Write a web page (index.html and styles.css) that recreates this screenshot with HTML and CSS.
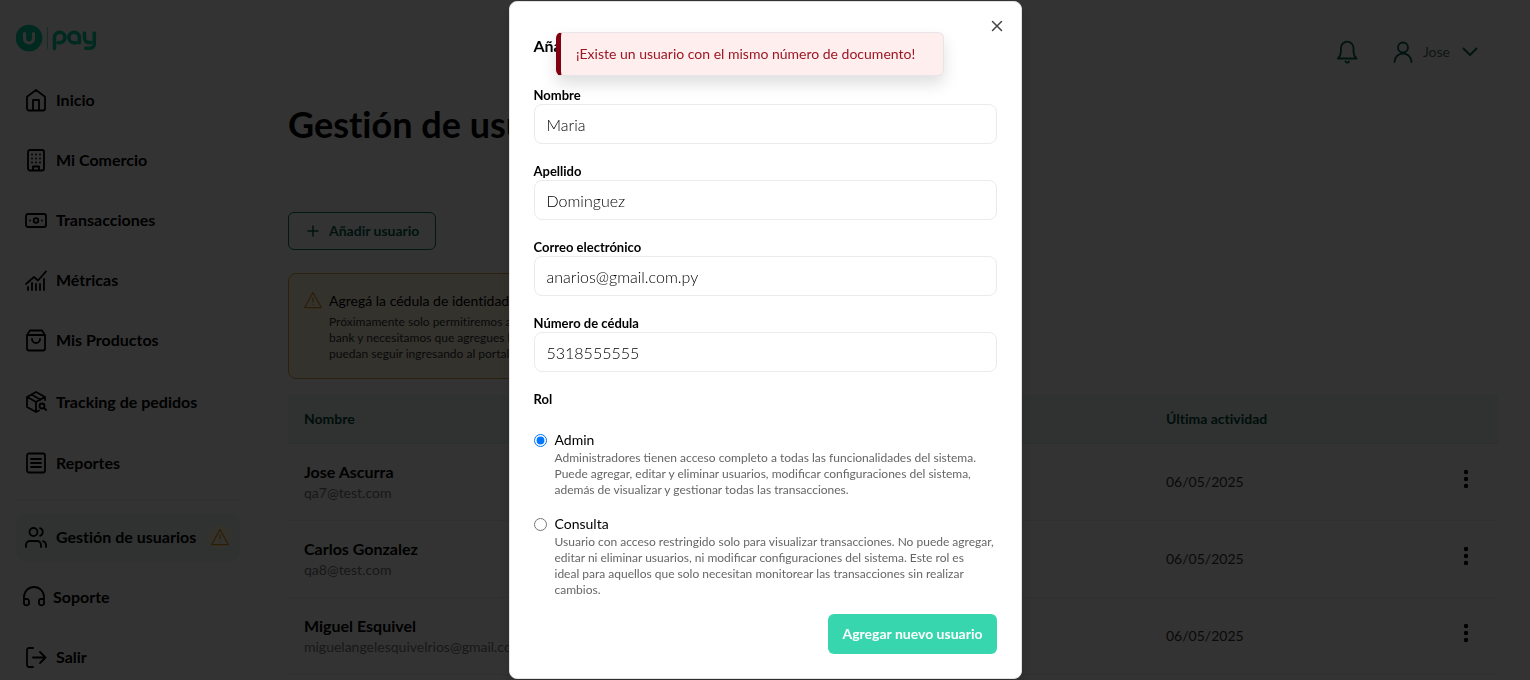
FILE: index.html
```html
<!DOCTYPE html>
<html lang="es">
<head>
<meta charset="utf-8">
<meta name="viewport" content="width=device-width, initial-scale=1">
<title>Gestión de usuarios</title>
<link rel="stylesheet" href="styles.css">
</head>
<body>
<div class="app">
  <aside class="sidebar">
    <a class="logo" href="#" aria-label="Upay">
      <svg width="82" height="28" viewBox="0 0 82 28" fill="none" stroke-linecap="round" stroke-linejoin="round">
        <circle cx="13" cy="14" r="13.300" fill="#00d09c" stroke="none"/>
        <path d="M8.500 9.500v5a4.500 4.500 0 0 0 9 0v-5" stroke="#fff" stroke-width="3.200"/>
        <path d="M13 8v6" stroke="#00d09c" stroke-width="2.400"/>
        <path d="M31.500 3.500v21" stroke="#00d09c" stroke-width="1" opacity=".6"/>
        <g stroke="#00d09c" stroke-width="3.600">
          <path d="M38.500 24.500V13.500a5.200 5.200 0 1 1 5.200 5.200h-1.500"/>
          <path d="M63.300 18.700V13.500a5.200 5.200 0 1 0-5.200 5.200h2"/>
          <path d="M68.500 9v5a4.600 4.600 0 0 0 4.600 4.600h1.500M78.300 9v11a4.200 4.200 0 0 1-4.200 4.200h-4.300"/>
        </g>
      </svg>
    </a>
    <nav class="nav">
      <a class="nav-item" href="#"><svg class="icon" viewBox="0 0 24 24"><path d="M3 8.700 12 2l9 6.700V20.500a2 2 0 0 1-2 2H5a2 2 0 0 1-2-2zM9 22V12h6v10"/></svg>Inicio</a>
      <a class="nav-item" href="#"><svg class="icon" viewBox="0 0 24 24"><rect x="4" y="2" width="16" height="20.500" rx="2"/><path d="M9 22v-3.500h6V22"/><path d="M8 6.500h.01M12 6.500h.01M16 6.500h.01M8 10.500h.01M12 10.500h.01M16 10.500h.01M8 14.500h.01M12 14.500h.01M16 14.500h.01"/></svg>Mi Comercio</a>
      <a class="nav-item" href="#"><svg class="icon" viewBox="0 0 24 24"><rect x="2" y="6" width="20" height="13" rx="2"/><circle cx="12" cy="12.500" r="2.300"/><path d="M6 12.500h.01M18 12.500h.01"/></svg>Transacciones</a>
      <a class="nav-item" href="#"><svg class="icon" viewBox="0 0 24 24"><path d="m2 16 8-7 4 3.500L22 3.500M4 22v-3M8 22v-7M12 22v-6M16 22v-6M20 22V11"/></svg>Métricas</a>
      <a class="nav-item" href="#"><svg class="icon" viewBox="0 0 24 24"><path d="M3 7v13.500a2 2 0 0 0 2 2h14a2 2 0 0 0 2-2V7l-3-4.500H6zM3 7h18M16 11a4 4 0 0 1-8 0"/></svg>Mis Productos</a>
      <a class="nav-item nav-item-tall" href="#"><svg class="icon" viewBox="0 0 24 24"><path d="M21 10V7l-9-5-9 5v10l9 5 3-1.500M3.300 7l8.700 5 8.700-5M12 22V12M7.500 4.500l9 5.200"/><circle cx="18" cy="16" r="2.500"/><path d="m20 18 2.200 2"/></svg>Tracking de pedidos</a>
      <a class="nav-item" href="#"><svg class="icon" viewBox="0 0 24 24"><rect x="3" y="2.500" width="18" height="19" rx="2"/><path d="M7 8h10M7 12h10M7 16h10"/></svg>Reportes</a>
      <hr class="nav-rule">
      <a class="nav-item nav-item-active" href="#" aria-current="page"><svg class="icon" viewBox="0 0 24 24"><circle cx="9.500" cy="7" r="4"/><path d="M2 22v-2a4 4 0 0 1 4-4h7a4 4 0 0 1 4 4v2M16 3.200a4 4 0 0 1 0 7.600M22 22v-2a4 4 0 0 0-3-3.800"/></svg>Gestión de usuarios
        <span class="nav-alert"><svg class="warning" viewBox="0 0 24 24"><path d="M12 3 22 21H2zM12 9v5M12 17.500h.01"/></svg></span></a>
      <a class="nav-item nav-item-close" href="#"><svg class="icon" viewBox="0 0 24 24"><path d="M2 14h3a2 2 0 0 1 2 2v3a3 3 0 0 1-5 0v-7a10 10 0 0 1 20 0v7a3 3 0 0 1-5 0v-3a2 2 0 0 1 2-2h3"/></svg>Soporte</a>
      <a class="nav-item" href="#"><svg class="icon" viewBox="0 0 24 24"><path d="M9 22H5a2 2 0 0 1-2-2V5a2 2 0 0 1 2-2h4M9 12.500h12M16 7l5.500 5.500L16 18"/></svg>Salir</a>
    </nav>
  </aside>
  <main class="main">
    <header class="topbar">
      <button class="plain" type="button" aria-label="Notificaciones"><svg class="icon icon-green" viewBox="0 0 24 24"><path d="M3 18.500h18.500c-2-2-3-3.500-3-6.500V8a6.300 6.300 0 0 0-12.600 0v4c0 3-.9 4.500-2.900 6.500zM10.500 21.500c1 1.500 2.500 1.500 3.500 0"/></svg></button>
      <button class="plain profile" type="button">
        <svg class="icon icon-green" viewBox="0 0 24 24"><circle cx="12" cy="7.500" r="5"/><path d="M3.500 22a8.500 8.500 0 0 1 17 0"/></svg>
        <span>Jose</span>
        <svg class="icon icon-green chevron" viewBox="0 0 24 24"><path d="m5.500 8.500 6.500 6.500 6.500-6.500"/></svg>
      </button>
    </header>
    <h1 class="page-title">Gestión de usuarios</h1>
    <button class="add-button" type="button"><svg viewBox="0 0 16 16" width="16" height="16"><path d="M8 3v10M3 8h10"/></svg>Añadir usuario</button>
    <section class="notice">
      <svg class="warning" viewBox="0 0 24 24"><path d="M12 3 22 21H2zM12 9v5M12 17.500h.01"/></svg>
      <div>
        <h2 class="notice-title">Agregá la cédula de identidad de tus usuarios</h2>
        <p class="notice-text">Próximamente solo permitiremos acceder<br>bank y necesitamos que agregues la cédula<br>puedan seguir ingresando al portal.</p>
      </div>
    </section>
    <table class="users">
      <thead><tr><th>Nombre</th><th class="col-date">Última actividad</th><th class="col-menu"></th></tr></thead>
      <tbody>
        <tr><td><strong>Jose Ascurra</strong><span class="email">qa7@test.com</span></td><td>06/05/2025</td><td class="col-menu"><button class="plain" type="button" aria-label="Opciones"><svg class="dots" viewBox="0 0 24 24"><circle cx="12" cy="5" r="2.200"/><circle cx="12" cy="12" r="2.200"/><circle cx="12" cy="19" r="2.200"/></svg></button></td></tr>
        <tr><td><strong>Carlos Gonzalez</strong><span class="email">qa8@test.com</span></td><td>06/05/2025</td><td class="col-menu"><button class="plain" type="button" aria-label="Opciones"><svg class="dots" viewBox="0 0 24 24"><circle cx="12" cy="5" r="2.200"/><circle cx="12" cy="12" r="2.200"/><circle cx="12" cy="19" r="2.200"/></svg></button></td></tr>
        <tr><td><strong>Miguel Esquivel</strong><span class="email">miguelangelesquivelrios@gmail.com</span></td><td>06/05/2025</td><td class="col-menu"><button class="plain" type="button" aria-label="Opciones"><svg class="dots" viewBox="0 0 24 24"><circle cx="12" cy="5" r="2.200"/><circle cx="12" cy="12" r="2.200"/><circle cx="12" cy="19" r="2.200"/></svg></button></td></tr>
      </tbody>
    </table>
  </main>
</div>

<div class="overlay">
  <div class="dialog" role="dialog" aria-modal="true" aria-labelledby="dialog-title">
    <button class="plain close" type="button" aria-label="Cerrar"><svg viewBox="0 0 16 16" width="16" height="16"><path d="m3.500 3.500 9 9m0-9-9 9"/></svg></button>
    <h2 class="dialog-title" id="dialog-title">Añadir usuario</h2>
    <form>
      <div class="field"><label for="nombre">Nombre</label><input id="nombre" type="text" value="Maria"></div>
      <div class="field"><label for="apellido">Apellido</label><input id="apellido" type="text" value="Dominguez"></div>
      <div class="field"><label for="correo">Correo electrónico</label><input id="correo" type="email" value="anarios@gmail.com.py"></div>
      <div class="field"><label for="cedula">Número de cédula</label><input id="cedula" type="text" value="5318555555"></div>
      <fieldset class="roles">
        <legend>Rol</legend>
        <div class="role">
          <input id="admin" type="radio" name="rol" checked>
          <div><label for="admin">Admin</label><p>Administradores tienen acceso completo a todas las funcionalidades del sistema.<br>Puede agregar, editar y eliminar usuarios, modificar configuraciones del sistema,<br>además de visualizar y gestionar todas las transacciones.</p></div>
        </div>
        <div class="role">
          <input id="consulta" type="radio" name="rol">
          <div><label for="consulta">Consulta</label><p>Usuario con acceso restringido solo para visualizar transacciones. No puede agregar,<br>editar ni eliminar usuarios, ni modificar configuraciones del sistema. Este rol es<br>ideal para aquellos que solo necesitan monitorear las transacciones sin realizar<br>cambios.</p></div>
        </div>
      </fieldset>
      <div class="actions"><button class="submit" type="submit">Agregar nuevo usuario</button></div>
    </form>
  </div>
</div>
<div class="toast" role="alert">¡Existe un usuario con el mismo número de documento!</div>
</body>
</html>
```
FILE: styles.css
```css
* { box-sizing: border-box; }
body {
  margin: 0;
  font-family: Lato, "Open Sans", sans-serif;
  font-size: 14px;
  line-height: 20px;
  color: #000;
  background: #fff;
}
h1, h2, p { margin: 0; }
button, input { font: inherit; color: inherit; }
a { color: inherit; text-decoration: none; }
.app { display: flex; height: 100vh; overflow: hidden; font-variant-ligatures: none; }
svg { display: block; fill: none; stroke: currentColor; stroke-width: 1.5; stroke-linecap: round; stroke-linejoin: round; flex: none; }
.plain { padding: 0; border: 0; background: none; }

.sidebar { flex: none; width: 256px; padding: 24px 16px 0; }
.logo { display: block; height: 52px; }
.nav { display: flex; flex-direction: column; gap: 12px; }
.nav-item { display: flex; align-items: center; gap: 8px; flex: none; height: 48px; padding: 0 8px; border-radius: 8px; font-size: 16px; font-weight: 700; white-space: nowrap; }
.nav-item-tall { height: 51px; }
.nav-item-close { padding-left: 6px; gap: 7px; }
.nav-item-active { background: #edf7f4; }
.nav-rule { width: 100%; height: 1px; margin: 0 0 1px; border: 0; background: #f0f0f0; }
.nav-alert { margin-left: auto; padding: 2px; border-radius: 50%; background: #fff7dc; }
.icon { width: 24px; height: 24px; stroke-width: 1.8; }
.warning { width: 20px; height: 20px; color: #dd9420; stroke-width: 1.5; }

.main { flex: 1; min-width: 0; padding: 40px 32px 0; background: #fcfcfc; }
.topbar { display: flex; justify-content: flex-end; align-items: center; gap: 32px; height: 24px; padding-right: 16px; }
.profile { display: flex; align-items: center; gap: 8px; color: #4a7268; }
.icon-green { color: #00624a; }
.page-title { margin-top: 38px; font-size: 36px; line-height: 44px; font-weight: 700; }
.add-button { display: flex; align-items: center; gap: 8px; height: 38px; margin-top: 66px; padding: 0 16px; border: 1px solid #00805f; border-radius: 6px; background: #fff; color: #00624a; font-weight: 700; }
.notice { display: flex; gap: 6px; max-width: 640px; margin-top: 23px; padding: 16px 14px; border: 1px solid #dba33c; border-radius: 8px; background: #fff8e1; }
.notice-title { font-size: 14px; line-height: 22px; font-weight: 400; }
.notice-text { margin-top: 2px; font-size: 12px; line-height: 16px; color: #333; }

.users { width: 100%; margin-top: 16px; border-collapse: collapse; table-layout: fixed; background: #fff; }
.users th { height: 48px; padding: 0 16px; text-align: left; color: #004d3a; background: #edf7f4; border-bottom: 1px solid #e5eceb; }
.users td { height: 77px; padding: 0 16px; border-bottom: 1px solid #ececec; color: #333; }
.users strong { display: block; font-size: 16px; line-height: 22px; color: #000; }
.email { display: block; line-height: 20px; color: #777; }
.users .col-date { width: 284px; }
.users .col-menu { width: 64px; padding: 0 20px; }
.dots { width: 24px; height: 24px; fill: #000; stroke: none; }

.overlay { position: fixed; inset: 0; display: grid; place-items: center; background: rgba(0, 0, 0, .8); }
.dialog { position: relative; width: 100%; max-width: 513px; padding: 24px; border: 1px solid #e2e2e2; border-radius: 8px; background: #fff; box-shadow: 0 8px 16px rgba(0, 0, 0, .15); }
.close { position: absolute; top: 16px; right: 16px; color: #444; }
.dialog-title { margin-bottom: 20px; font-size: 16px; line-height: 40px; font-weight: 700; }
.field { display: flex; flex-direction: column; margin-bottom: 18px; }
.field label, .roles legend { padding: 0; font-size: 13px; line-height: 18px; font-weight: 700; }
.field input { height: 40px; padding: 0 12px; border: 1px solid #ebebeb; border-radius: 8px; background: #fff; font-size: 16px; font-weight: 300; }
.roles { margin: 0; padding: 0; border: 0; min-width: 0; }
.roles legend { margin-bottom: 22px; }
.role { display: flex; gap: 8px; margin-bottom: 16px; }
.role input { flex: none; width: 13px; height: 13px; margin: 4px 0 0; }
.role label { display: block; }
.role p { font-size: 12px; line-height: 16px; color: #666; }
.actions { display: flex; justify-content: flex-end; }
.submit { height: 40px; padding: 0 14px; border: 0; border-radius: 6px; background: #37d6ae; color: #fff; font-weight: 700; }

.toast { position: fixed; top: 32px; left: 50%; width: 388px; margin-left: -209px; padding: 12px 15px; border: 1px solid #e8e4e7; border-left: 5px solid #800010; border-radius: 6px; background: #feeeee; color: #9c1724; line-height: 18px; box-shadow: 0 8px 16px rgba(0, 0, 0, .13); white-space: nowrap; }
```
